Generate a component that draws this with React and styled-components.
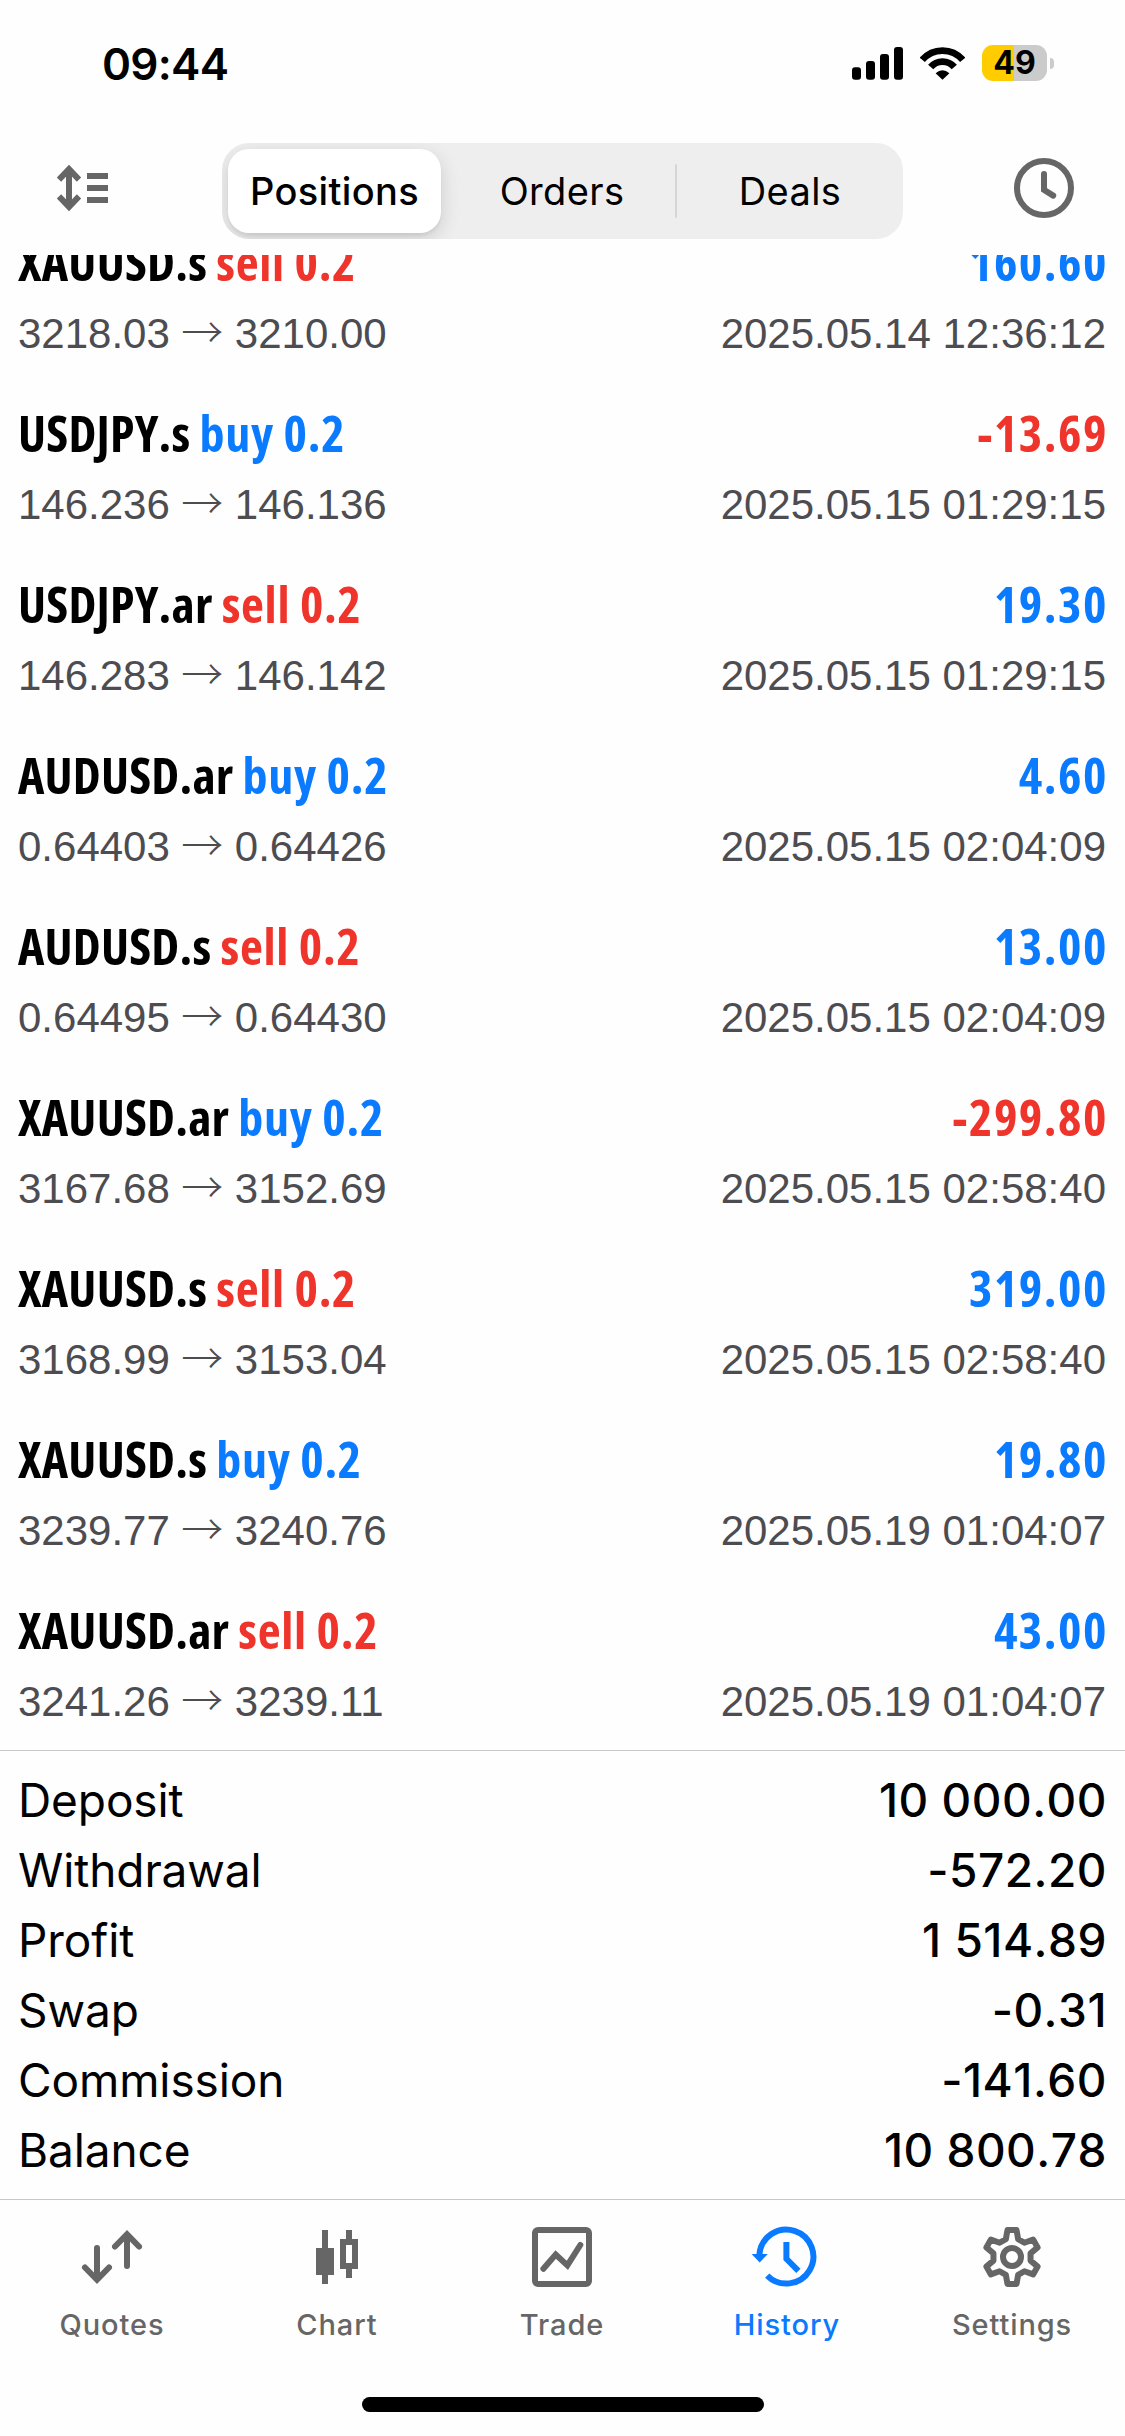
import React from "react";
import styled, { createGlobalStyle } from "styled-components";

const BLUE = "#0a7aff";
const RED = "#ee342b";
const GRAY = "#666666";

const GlobalStyle = createGlobalStyle`
  *, *::before, *::after { box-sizing: border-box; }
  body { margin: 0; background: #fff; }
  button { font: inherit; color: inherit; border: 0; padding: 0; background: none; }
`;

const Screen = styled.div`
  width: 1125px;
  height: 2436px;
  display: flex;
  flex-direction: column;
  overflow: hidden;
  background: #fefefe;
  color: #000;
  font-family: Inter, "Liberation Sans", sans-serif;
`;

const StatusBar = styled.header`
  flex: none;
  height: 132px;
  padding: 38px 71px 0 102px;
  display: flex;
  justify-content: space-between;
  align-items: flex-start;
`;

const Time = styled.div`
  font-size: 44px;
  line-height: 52px;
  font-weight: 600;
  letter-spacing: -0.7px;
`;

const StatusIcons = styled.div`
  display: flex;
  align-items: flex-start;
  padding-top: 7px;
`;

const SignalSvg = styled.svg`
  display: block;
  margin: 2px 17px 0 0;
`;

const WifiSvg = styled.svg`
  display: block;
  margin: 2px 17px 0 0;
`;

const Battery = styled.div`
  width: 65px;
  height: 36px;
  border-radius: 11px;
  display: flex;
  align-items: center;
  justify-content: center;
  background: linear-gradient(to right, #ffcc00 49%, #cbcbcb 49%);
  font-size: 32px;
  line-height: 38px;
  font-weight: 700;
`;

const BatteryCap = styled.div`
  width: 4px;
  height: 11px;
  margin: 13px 0 0 3px;
  border-radius: 0 5px 5px 0;
  background: #cbcbcb;
`;

const Toolbar = styled.div`
  flex: none;
  height: 123px;
  padding: 11px 48px 16px 54px;
  display: flex;
  justify-content: space-between;
  align-items: center;
`;

const ToolButton = styled.button`
  display: block;
  height: 66px;
  margin-top: -6px;
  svg { display: block; }
`;

const Segmented = styled.div`
  width: 681px;
  height: 96px;
  margin: 0 auto 0 108px;
  border-radius: 27px;
  background: #eeeeee;
  display: flex;
  align-items: center;
  overflow: hidden;
`;

const Segment = styled.button`
  flex: none;
  width: ${(p) => (p.$active ? 213 : 226)}px;
  height: 84px;
  margin: ${(p) => (p.$active ? "0 8px 0 6px" : "0")};
  border-radius: 21px;
  font-size: 38px;
  line-height: 84px;
  font-weight: ${(p) => (p.$active ? 500 : 400)};
  letter-spacing: 0.35px;
  background: ${(p) => (p.$active ? "#fff" : "transparent")};
  box-shadow: ${(p) => (p.$active ? "0 6px 20px rgba(0,0,0,.14), 0 3px 3px rgba(0,0,0,.05)" : "none")};
`;

const Divider = styled.div`
  width: 3px;
  height: 54px;
  border-radius: 2px;
  background: #d6d6d6;
`;

const List = styled.ul`
  flex: none;
  height: 1495px;
  margin: 0;
  padding: 0;
  list-style: none;
  overflow: hidden;
  display: flex;
  flex-direction: column;
  justify-content: flex-end;
`;

const Row = styled.li`
  flex: none;
  height: 171px;
  padding: 16px 18px 0;
`;

const RowLine = styled.div`
  display: flex;
  justify-content: space-between;
  white-space: pre;
`;

const Title = styled.div`
  height: 79px;
  line-height: 71px;
  font-family: "Open Sans", sans-serif;
  font-size: 50px;
  font-weight: 700;
  font-stretch: 75%;
  letter-spacing: 0.2px;
`;

const Amount = styled(Title)`
  letter-spacing: 1.5px;
  margin-right: -1px;
  color: ${(p) => (p.$negative ? RED : BLUE)};
`;

const Side = styled.span`
  letter-spacing: 0.7px;
  color: ${(p) => (p.$sell ? RED : BLUE)};
`;

const Detail = styled.div`
  display: flex;
  align-items: baseline;
  font-family: "Liberation Sans", Arial, sans-serif;
  font-size: 42px;
  line-height: 56px;
  color: #4c4c51;
`;

const Timestamp = styled(Detail)`
  margin-right: 1px;
`;

const Arrow = styled.span`
  width: 65px;
  text-align: center;
  font-family: "Noto Sans CJK JP", sans-serif;
  font-weight: 300;
  line-height: 40px;
`;

const Summary = styled.dl`
  flex: none;
  height: 449px;
  margin: 0;
  padding: 14px 18px 0;
  border-top: 1px solid #c8c8c8;
`;

const SummaryRow = styled.div`
  display: flex;
  justify-content: space-between;
  font-size: 46px;
  line-height: 70px;
  dt { letter-spacing: -0.1px; }
  dd {
    margin: 0;
    font-weight: 500;
    font-kerning: none;
    letter-spacing: 0.5px;
  }
`;

const TabBar = styled.nav`
  flex: none;
  height: 198px;
  padding-top: 21px;
  border-top: 1px solid #c8c8c8;
  display: grid;
  grid-template-columns: repeat(5, 225px);
`;

const Tab = styled.button`
  display: flex;
  flex-direction: column;
  align-items: center;
  gap: 12px;
  padding-right: 1px;
  color: ${(p) => (p.$active ? BLUE : GRAY)};
  font-size: 29px;
  line-height: 39px;
  font-weight: 500;
  letter-spacing: 0.9px;
`;

const TabSvg = styled.svg`
  display: block;
  width: 72px;
  height: 72px;
  fill: none;
  stroke: currentColor;
  stroke-width: 2;
`;

const HomeBar = styled.div`
  flex: none;
  align-self: center;
  width: 402px;
  height: 15px;
  border-radius: 8px;
  background: #000;
`;

const positions = [
  ["XAUUSD.s", "sell", "3218.03", "3210.00", "160.60", "2025.05.14 12:36:12"],
  ["USDJPY.s", "buy", "146.236", "146.136", "-13.69", "2025.05.15 01:29:15"],
  ["USDJPY.ar", "sell", "146.283", "146.142", "19.30", "2025.05.15 01:29:15"],
  ["AUDUSD.ar", "buy", "0.64403", "0.64426", "4.60", "2025.05.15 02:04:09"],
  ["AUDUSD.s", "sell", "0.64495", "0.64430", "13.00", "2025.05.15 02:04:09"],
  ["XAUUSD.ar", "buy", "3167.68", "3152.69", "-299.80", "2025.05.15 02:58:40"],
  ["XAUUSD.s", "sell", "3168.99", "3153.04", "319.00", "2025.05.15 02:58:40"],
  ["XAUUSD.s", "buy", "3239.77", "3240.76", "19.80", "2025.05.19 01:04:07"],
  ["XAUUSD.ar", "sell", "3241.26", "3239.11", "43.00", "2025.05.19 01:04:07"],
];

const summary = [
  ["Deposit", "10 000.00"],
  ["Withdrawal", "-572.20"],
  ["Profit", "1 514.89"],
  ["Swap", "-0.31"],
  ["Commission", "-141.60"],
  ["Balance", "10 800.78"],
];

// One tooth of the gear, turned six times around the centre.
const gear = Array.from({ length: 6 }, (_, i) => {
  const a = (i * Math.PI) / 3;
  return [[-2.05, -5.95], [-1.5, -9], [1.5, -9], [2.05, -5.95]]
    .map(([x, y]) =>
      `${(12 + x * Math.cos(a) - y * Math.sin(a)).toFixed(2)},${(12 + x * Math.sin(a) + y * Math.cos(a)).toFixed(2)}`)
    .join(" ");
}).join(" ");

const tabs = [
  ["Quotes", <g strokeLinecap="round"><path d="M7 9V19M3 15.5 7 19.6 11 15.5" /><path d="M17 15V5M13 8.5 17 4.4 21 8.5" /></g>],
  ["Chart", <g fill="currentColor" stroke="none"><path d="M7 3H9V9H11V18H9V21H7V18H5V9H7Z" /><path fillRule="evenodd" d="M15 3H17V6H19V16H17V19H15V16H13V6H15ZM15 8V14H17V8Z" /></g>],
  ["Trade", <g strokeLinecap="round"><rect x="3" y="3" width="18" height="18" rx="1" /><path d="M5.8 15.9 9.9 11.2 13.8 14.8 18.1 8" /></g>],
  ["History", <g><path d="M5.4 18.2A9 9 0 1 0 2.8 11.3" /><path d="M11.8 7V12.6L15.8 16.6" /><path fill="currentColor" stroke="none" d="M0.2 11H5.6L2.9 13.8Z" /></g>],
  ["Settings", <g strokeLinejoin="round"><polygon points={gear} /><circle cx="12" cy="12" r="3" /></g>],
];

export default function App() {
  return (
    <Screen>
      <GlobalStyle />
      <StatusBar>
        <Time>09:44</Time>
        <StatusIcons>
          <SignalSvg width="51" height="33" viewBox="0 0 51 33">
            <rect x="0" y="20.3" width="9" height="12.4" rx="3" />
            <rect x="14" y="14" width="9" height="18.7" rx="3" />
            <rect x="28" y="7" width="9" height="25.7" rx="3" />
            <rect x="42" y="0" width="9" height="32.7" rx="3" />
          </SignalSvg>
          <WifiSvg width="45" height="33" viewBox="0 0 45 33" fill="none" stroke="#000" strokeWidth="6.8">
            <path d="M2.3 12.9A26.5 26.5 0 0 1 42.7 12.9" />
            <path d="M10.7 20A15.5 15.5 0 0 1 34.3 20" />
            <path d="M22.5 32.7 15.6 26.2Q22.5 20.5 29.4 26.2Z" fill="#000" stroke="none" />
          </WifiSvg>
          <Battery>49</Battery>
          <BatteryCap />
        </StatusIcons>
      </StatusBar>

      <Toolbar>
        <ToolButton aria-label="Sort">
          <svg width="60" height="66" viewBox="0 0 60 66" fill="none" stroke={GRAY} strokeWidth="6">
            <path d="M15 15V51M5 24.6 15 14.2 25 24.6M5 41.4 15 51.8 25 41.4" />
            <path d="M33 21H54M33 33H54M33 45H54" />
          </svg>
        </ToolButton>
        <Segmented>
          <Segment $active>Positions</Segment>
          <Segment>Orders</Segment>
          <Divider />
          <Segment>Deals</Segment>
        </Segmented>
        <ToolButton aria-label="Period">
          <svg width="66" height="66" viewBox="0 0 66 66" fill="none" stroke={GRAY} strokeWidth="6">
            <circle cx="33" cy="33" r="27" />
            <path d="M33 19V34.8L42.2 40.6" strokeLinecap="round" />
          </svg>
        </ToolButton>
      </Toolbar>

      <List>
        {positions.map(([symbol, side, open, close, profit, time], i) => (
          <Row key={i}>
            <RowLine>
              <Title>{symbol} <Side $sell={side === "sell"}>{side} 0.2</Side></Title>
              <Amount $negative={profit.startsWith("-")}>{profit}</Amount>
            </RowLine>
            <RowLine>
              <Detail>{open}<Arrow>→</Arrow>{close}</Detail>
              <Timestamp>{time}</Timestamp>
            </RowLine>
          </Row>
        ))}
      </List>

      <Summary>
        {summary.map(([label, value]) => (
          <SummaryRow key={label}>
            <dt>{label}</dt>
            <dd>{value}</dd>
          </SummaryRow>
        ))}
      </Summary>

      <TabBar>
        {tabs.map(([label, icon]) => (
          <Tab key={label} $active={label === "History"}>
            <TabSvg viewBox="0 0 24 24">{icon}</TabSvg>
            <span>{label}</span>
          </Tab>
        ))}
      </TabBar>
      <HomeBar />
    </Screen>
  );
}
